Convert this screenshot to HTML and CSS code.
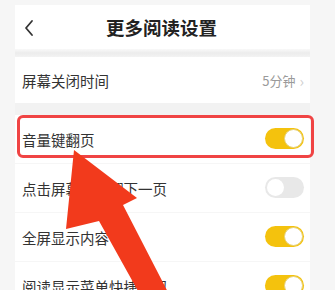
FILE: index.html
```html
<!DOCTYPE html>
<html lang="zh">
<head>
<meta charset="utf-8">
<link rel="stylesheet" href="styles.css">
</head>
<body>
<div class="panel">
  <div class="header">
    <svg class="back" width="12" height="18" viewBox="0 0 12 18"><path d="M9 2 L3 9 L9 16" fill="none" stroke="#333" stroke-width="1.8" stroke-linecap="round" stroke-linejoin="round"/></svg>
    <div class="title">更多阅读设置</div>
  </div>
  <div class="band band1"></div>
  <div class="row row-first">
    <span class="label">屏幕关闭时间</span>
    <span class="value">5分钟<span class="chev">›</span></span>
  </div>
  <div class="band band2"></div>
  <div class="row">
    <span class="label">音量键翻页</span>
    <span class="toggle on"></span>
  </div>
  <div class="row">
    <span class="label">点击屏幕左侧翻下一页</span>
    <span class="toggle"></span>
  </div>
  <div class="row">
    <span class="label">全屏显示内容</span>
    <span class="toggle on"></span>
  </div>
  <div class="row">
    <span class="label">阅读显示菜单快捷按钮</span>
    <span class="toggle on"></span>
  </div>
</div>
<div class="highlight"></div>
<svg class="arrow" width="335" height="290" viewBox="0 0 335 290">
  <polygon points="74,150 137,198 123,205 172,300 143,300 99,221 66,229" fill="#f23a1c"/>
</svg>
</body>
</html>
```
FILE: styles.css
```css
html, body {
  margin: 0;
  padding: 0;
}
body {
  width: 335px;
  height: 290px;
  overflow: hidden;
  background: #f6f6f6;
  font-family: "Noto Sans CJK SC", "Noto Sans", sans-serif;
  position: relative;
}
.panel {
  margin: 5px 0 0 15px;
  width: 295px;
  background: #fff;
}
.header {
  height: 44px;
  display: flex;
  align-items: center;
  justify-content: center;
  position: relative;
}
.back {
  position: absolute;
  left: 8px;
  top: 14px;
}
.title {
  font-size: 18.5px;
  font-weight: 700;
  color: #222;
  margin-left: -2px;
}
.band {
  background: linear-gradient(#f9f9f9, #ececec 50%, #f3f3f3);
}
.band1 { height: 8px; }
.band2 { height: 12px; background: #f2f2f2; }
.row {
  height: 49px;
  display: flex;
  align-items: center;
  justify-content: space-between;
  padding: 0 6px 0 7px;
  border-bottom: 1px solid #f6f6f6;
  box-sizing: border-box;
}
.row-first {
  height: 46px;
  border-bottom: none;
}
.label {
  font-size: 14.5px;
  color: #333;
}
.value {
  font-size: 13px;
  color: #9a9a9a;
  display: flex;
  align-items: center;
  gap: 4px;
}
.chev {
  color: #cfcfcf;
  font-size: 15px;
}
.toggle {
  width: 39px;
  height: 21px;
  border-radius: 11px;
  background: #e8e8e8;
  position: relative;
  margin-top: -2px;
}
.toggle::after {
  content: "";
  position: absolute;
  top: 2px;
  left: 2px;
  width: 17px;
  height: 17px;
  border-radius: 50%;
  background: #fff;
}
.toggle.on {
  background: #f4c20d;
}
.toggle.on::after {
  left: auto;
  right: 1px;
  top: 1px;
  width: 17px;
  height: 17px;
  border: 1px solid #e6d17a;
}
.highlight {
  position: absolute;
  left: 17px;
  top: 115px;
  width: 297px;
  height: 43px;
  box-sizing: border-box;
  border: 3px solid #f04444;
  border-radius: 6px;
}
.arrow {
  position: absolute;
  left: 0;
  top: 0;
  pointer-events: none;
}
```
